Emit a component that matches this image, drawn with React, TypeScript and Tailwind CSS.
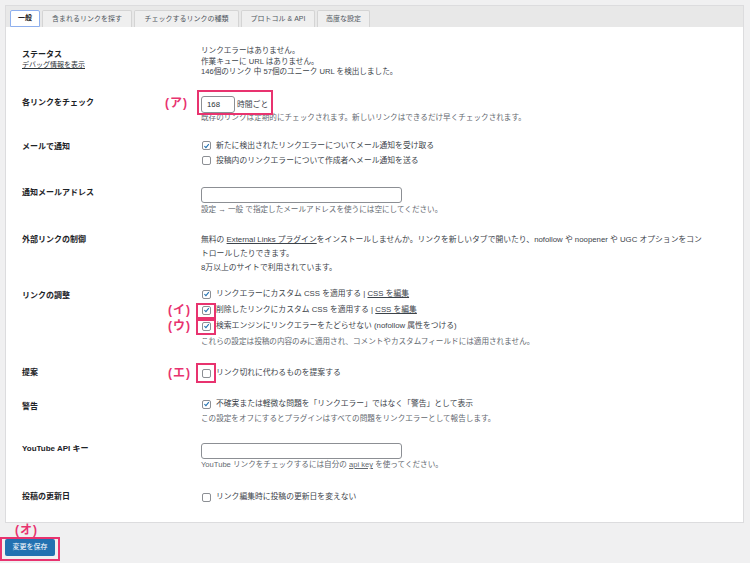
import React from "react";

const FONT = {
  fontFamily: '"Liberation Sans", "Noto Sans CJK JP", sans-serif',
};

type RowProps = {
  label: React.ReactNode;
  sub?: React.ReactNode;
  height: string;
  labelPad: string;
  valuePad: string;
  children: React.ReactNode;
};

const Row: React.FC<RowProps> = ({ label, sub, height, labelPad, valuePad, children }) => (
  <div className={`flex ${height}`}>
    <div className={`w-[195px] shrink-0 pl-[16px] ${labelPad}`}>
      <div className="text-[8px] font-bold leading-[11px] text-[#1d2327]">{label}</div>
      {sub}
    </div>
    <div className={`flex-1 ${valuePad}`}>{children}</div>
  </div>
);

const Checkbox: React.FC<{ checked?: boolean }> = ({ checked }) => (
  <span className="flex h-[9px] w-[9px] shrink-0 items-center justify-center rounded-[2px] border border-[#8c8f94] bg-white">
    {checked && (
      <svg viewBox="0 0 10 10" className="h-[8px] w-[8px]">
        <path d="M2 5.3 L4.2 7.4 L8.3 2.4" stroke="#2271b1" strokeWidth="1.5" fill="none" />
      </svg>
    )}
  </span>
);

const CheckLine: React.FC<{ checked?: boolean; lh: string; children: React.ReactNode }> = ({
  checked,
  lh,
  children,
}) => (
  <div className={`flex items-center gap-[5px] pl-[1px] ${lh} whitespace-nowrap text-[7.8px] text-[#3c434a]`}>
    <Checkbox checked={checked} />
    <span>{children}</span>
  </div>
);

const Desc: React.FC<{ className?: string; children: React.ReactNode }> = ({ className, children }) => (
  <div className={`whitespace-nowrap text-[7.6px] leading-[10px] text-[#646970] ${className ?? ""}`}>{children}</div>
);

const tabs = [
  { name: "一般", w: "w-[30px]", active: true },
  { name: "含まれるリンクを探す", w: "w-[90px]" },
  { name: "チェックするリンクの種類", w: "w-[105px]" },
  { name: "プロトコル & API", w: "w-[74px]" },
  { name: "高度な設定", w: "w-[53px]" },
];

const Mark: React.FC<{ box: string; tag: string; text: string }> = ({ box, tag, text }) => (
  <>
    <div className={`pointer-events-none absolute border-2 border-[#e8336f] ${box}`} />
    <span className={`absolute text-[12px] font-bold leading-[14px] tracking-[1px] text-[#e8336f] ${tag}`}>
      {text}
    </span>
  </>
);

export default function App() {
  return (
    <div className="relative h-[563px] w-[750px] overflow-hidden bg-[#f0f0f1]" style={FONT}>
      <div className="pl-[5px] pr-[6px] pt-[5px]">
        <div className="h-[518px] border border-[#dcdcde] bg-white">
          {/* tab strip */}
          <div className="flex h-[21px] items-end gap-[2px] bg-[#e8e8e8] pl-[4px]">
            {tabs.map((t) => (
              <div
                key={t.name}
                className={`flex h-[17px] ${t.w} items-center justify-center whitespace-nowrap rounded-t-[2px] border text-[7px] ${
                  t.active
                    ? "border-[#8fb0ee] bg-white font-bold text-[#1d2327]"
                    : "border-[#d4d4d4] border-b-0 bg-[#efefef] text-[#50575e]"
                }`}
              >
                {t.name}
              </div>
            ))}
          </div>

          <Row
            label="ステータス"
            sub={<div className="text-[7px] leading-[10px] text-[#2c3338] underline">デバッグ情報を表示</div>}
            height="h-[61px]"
            labelPad="pt-[22px]"
            valuePad="pt-[19px]"
          >
            <div className="whitespace-nowrap text-[7.6px] leading-[10.5px] text-[#3c434a]">
              リンクエラーはありません。
              <br />
              作業キューに URL はありません。
              <br />
              146個のリンク 中 57個のユニーク URL を検出しました。
            </div>
          </Row>

          <Row label="各リンクをチェック" height="h-[42px]" labelPad="pt-[9px]" valuePad="pt-[8px]">
            <div className="flex items-center gap-[2px] text-[7.8px] text-[#3c434a]">
              <div className="flex h-[17px] w-[34px] items-center rounded-[3px] border border-[#8c8f94] bg-white pl-[5px] text-[7.8px] text-[#2c3338]">
                168
              </div>
              <span>時間ごと</span>
            </div>
            <Desc>既存のリンクは定期的にチェックされます。新しいリンクはできるだけ早くチェックされます。</Desc>
          </Row>

          <Row label="メールで通知" height="h-[46px]" labelPad="pt-[11px]" valuePad="pt-[8px]">
            <CheckLine checked lh="h-[15px]">
              新たに検出されたリンクエラーについてメール通知を受け取る
            </CheckLine>
            <CheckLine lh="h-[15px]">投稿内のリンクエラーについて作成者へメール通知を送る</CheckLine>
          </Row>

          <Row label="通知メールアドレス" height="h-[49px]" labelPad="pt-[11px]" valuePad="pt-[11px]">
            <div className="h-[16px] w-[201px] rounded-[3px] border border-[#8c8f94] bg-white" />
            <Desc className="mt-[2px]">設定 → 一般 で指定したメールアドレスを使うには空にしてください。</Desc>
          </Row>

          <Row label="外部リンクの制御" height="h-[55px]" labelPad="pt-[9px]" valuePad="pt-[8px]">
            <div className="whitespace-nowrap text-[7.8px] leading-[14px] text-[#3c434a]">
              無料の <span className="underline">External Links プラグイン</span>
              をインストールしませんか。リンクを新しいタブで開いたり、nofollow や noopener や UGC オプションをコン
              <br />
              トロールしたりできます。
              <br />
              8万以上のサイトで利用されています。
            </div>
          </Row>

          <Row label="リンクの調整" height="h-[78px]" labelPad="pt-[10px]" valuePad="pt-[6px]">
            <CheckLine checked lh="h-[16px]">
              リンクエラーにカスタム CSS を適用する | <span className="underline">CSS を編集</span>
            </CheckLine>
            <CheckLine checked lh="h-[16px]">
              削除したリンクにカスタム CSS を適用する | <span className="underline">CSS を編集</span>
            </CheckLine>
            <CheckLine checked lh="h-[16px]">
              検索エンジンにリンクエラーをたどらせない (nofollow 属性をつける)
            </CheckLine>
            <Desc className="mt-[3px]">
              これらの設定は投稿の内容のみに適用され、コメントやカスタムフィールドには適用されません。
            </Desc>
          </Row>

          <Row label="提案" height="h-[34px]" labelPad="pt-[9px]" valuePad="pt-[7px]">
            <CheckLine lh="h-[16px]">リンク切れに代わるものを提案する</CheckLine>
          </Row>

          <Row label="警告" height="h-[40px]" labelPad="pt-[9px]" valuePad="pt-[5px]">
            <CheckLine checked lh="h-[14px]">
              不確実または軽微な問題を「リンクエラー」ではなく「警告」として表示
            </CheckLine>
            <Desc className="mt-[3px]">この設定をオフにするとプラグインはすべての問題をリンクエラーとして報告します。</Desc>
          </Row>

          <Row label="YouTube API キー" height="h-[48px]" labelPad="pt-[11px]" valuePad="pt-[11px]">
            <div className="h-[16px] w-[201px] rounded-[3px] border border-[#8c8f94] bg-white" />
            <Desc className="mt-[1px]">
              YouTube リンクをチェックするには自分の <span className="underline">api key</span> を使ってください。
            </Desc>
          </Row>

          <Row label="投稿の更新日" height="h-[40px]" labelPad="pt-[11px]" valuePad="pt-[10px]">
            <CheckLine lh="h-[14px]">リンク編集時に投稿の更新日を変えない</CheckLine>
          </Row>
        </div>

        <button
          type="button"
          className="mt-[16px] flex h-[17px] w-[50px] items-center justify-center rounded-[2px] bg-[#2271b1] text-[7px] text-white"
        >
          変更を保存
        </button>
      </div>

      <Mark box="left-[197px] top-[90px] h-[25px] w-[76px]" tag="left-[165px] top-[96px]" text="(ア)" />
      <Mark box="left-[196px] top-[303px] h-[16px] w-[20px]" tag="left-[168px] top-[303px]" text="(イ)" />
      <Mark box="left-[196px] top-[319px] h-[16px] w-[20px]" tag="left-[168px] top-[319px]" text="(ウ)" />
      <Mark box="left-[196px] top-[363px] h-[20px] w-[20px]" tag="left-[168px] top-[366px]" text="(エ)" />
      <Mark box="left-[0px] top-[537px] h-[24px] w-[60px]" tag="left-[15px] top-[523px]" text="(オ)" />
    </div>
  );
}
